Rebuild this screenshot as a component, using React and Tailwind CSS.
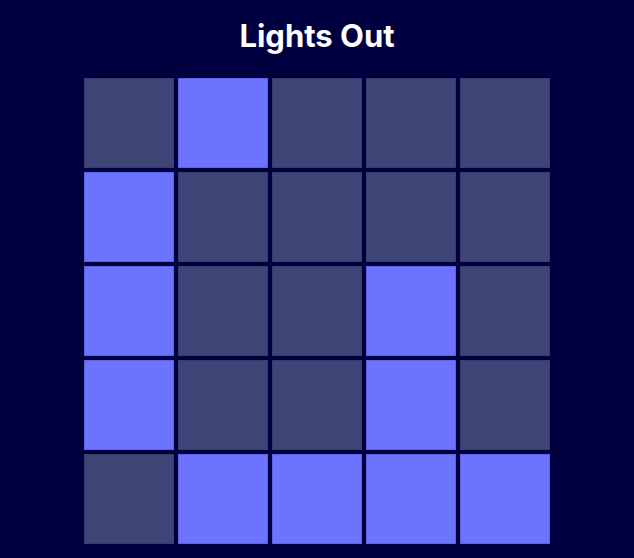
import React, { useState } from "react";

const INITIAL = [
  [0, 1, 0, 0, 0],
  [1, 0, 0, 0, 0],
  [1, 0, 0, 1, 0],
  [1, 0, 0, 1, 0],
  [0, 1, 1, 1, 1],
];

export default function App() {
  const [board, setBoard] = useState(INITIAL);

  // toggle a cell and its four neighbours
  function press(r, c) {
    setBoard((b) =>
      b.map((row, i) =>
        row.map((v, j) =>
          (i === r && Math.abs(j - c) <= 1) || (j === c && Math.abs(i - r) <= 1) ? 1 - v : v
        )
      )
    );
  }

  return (
    <main className="min-h-[558px] bg-[#000040] flex flex-col items-center pt-[16px] font-['Inter','Liberation_Sans',sans-serif]">
      <h1 className="text-[31px] leading-[40px] font-bold text-white mb-[22px]">Lights Out</h1>
      <div className="grid grid-cols-5 gap-[4px]">
        {board.map((row, r) =>
          row.map((on, c) => (
            <button
              key={`${r}-${c}`}
              onClick={() => press(r, c)}
              className={
                on
                  ? "w-[90px] h-[90px] bg-[#6b73ff] border border-[#5c63e6]"
                  : "w-[90px] h-[90px] bg-[#3e4677] border border-[#363d6b]"
              }
            />
          ))
        )}
      </div>
    </main>
  );
}
